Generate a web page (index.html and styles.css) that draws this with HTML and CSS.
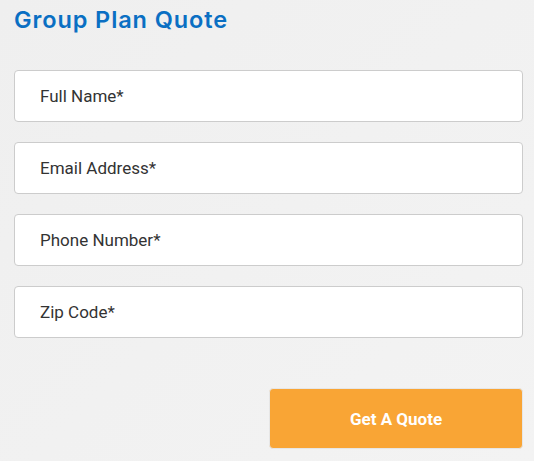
FILE: index.html
```html
<!DOCTYPE html>
<html>
<head>
<meta charset="utf-8">
<link rel="stylesheet" href="styles.css">
</head>
<body>
<div class="form">
  <h2 class="title">Group Plan Quote</h2>
  <div class="fields">
    <div class="field">Full Name*</div>
    <div class="field">Email Address*</div>
    <div class="field">Phone Number*</div>
    <div class="field">Zip Code*</div>
  </div>
  <div class="actions">
    <button class="btn">Get A Quote</button>
  </div>
</div>
</body>
</html>
```
FILE: styles.css
```css
html, body {
  margin: 0;
  padding: 0;
  height: 100%;
}
body {
  background: linear-gradient(135deg, #efefef 0%, #f1f1f1 50%, #f3f3f3 100%);
  font-family: Roboto, "Liberation Sans", sans-serif;
}
.form {
  padding: 5px 11px 0 14px;
}
.title {
  margin: 0;
  font-family: Inter, "Open Sans", sans-serif;
  font-weight: 600;
  font-size: 23.5px;
  line-height: 30px;
  color: #0a6fc3;
  letter-spacing: 0.9px;
}
.fields {
  margin-top: 35px;
  display: flex;
  flex-direction: column;
  gap: 20px;
}
.field {
  box-sizing: border-box;
  height: 52px;
  border: 1px solid #cccccc;
  border-radius: 4px;
  background: #fff;
  padding-left: 25px;
  display: flex;
  align-items: center;
  font-size: 17px;
  color: #333;
}
.actions {
  display: flex;
  justify-content: flex-end;
  margin-top: 50px;
}
.btn {
  width: 254px;
  height: 61px;
  border: 1px solid #e6e6e6;
  border-radius: 4px;
  background: #f9a535;
  color: #fff;
  font-family: Roboto, "Liberation Sans", sans-serif;
  font-weight: 700;
  font-size: 17px;
}
```
